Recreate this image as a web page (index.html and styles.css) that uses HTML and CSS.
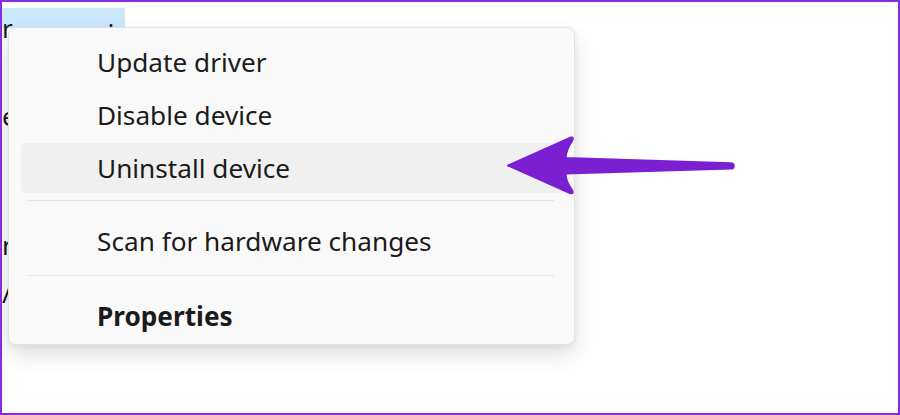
FILE: index.html
```html
<!doctype html>
<html lang="en">
<head>
	<meta charset="UTF-8">
	<title>Device menu</title>
	<link rel="stylesheet" href="styles.css">
</head>
<body>
	<div id="frame">
		<div class="tree">
			<div class="tree-row selected"><span class="dot">.</span></div>
			<div class="tree-line l1">r</div>
			<div class="tree-line l2">e</div>
			<div class="tree-line l3">n</div>
			<div class="tree-line l4">/</div>
		</div>

		<ul class="menu">
			<li class="item"><a href="javascript:;">Update driver</a></li>
			<li class="item"><a href="javascript:;">Disable device</a></li>
			<li class="item hover"><a href="javascript:;">Uninstall device</a></li>
			<li class="sep"></li>
			<li class="item"><a href="javascript:;">Scan for hardware changes</a></li>
			<li class="sep sep-2"></li>
			<li class="item bold"><a href="javascript:;">Properties</a></li>
		</ul>

		<svg class="arrow" width="900" height="415" viewBox="0 0 900 415">
			<path d="M508 165.5 L571 137.5 Q574 137 572 141 Q566 150 565.5 158 L731 163.2 A2.7 2.7 0 0 1 731 168.6 L565.5 173.5 Q566 182 572 190 Q574 194.5 570 193 Z" fill="#7a1fd2" stroke="#7a1fd2" stroke-width="2" stroke-linejoin="round"/>
		</svg>
	</div>
</body>
</html>
```

FILE: styles.css
```css
body,ul,li{
	margin:0;
	padding:0;
}
body{
	background:#fff;
	font-family:"Noto Sans","Open Sans",sans-serif;
}
ul li{
	list-style:none;
}
a{
	text-decoration:none;
	color:#1b1b1b;
	outline:none;
}
#frame{
	width:900px;
	height:415px;
	box-sizing:border-box;
	border:2px solid #8a2be2;
	position:relative;
	overflow:hidden;
	background:#fff;
}

/* tree behind the menu */
.tree{
	padding-top:6px;
	font-size:26px;
	color:#1b1b1b;
}
.tree-row.selected{
	width:123px;
	height:20px;
	line-height:20px;
	padding-left:106px;
	box-sizing:border-box;
	background:#cce8ff;
	font-size:22px;
}
.tree-line{
	width:14px;
	height:32px;
	line-height:32px;
}
.tree-line.l1{
	margin-top:-16px;
}
.tree-line.l2{
	margin-top:56px;
}
.tree-line.l3{
	margin-top:97px;
}
.tree-line.l4{
	margin-top:16px;
}

/* context menu */
.menu{
	position:absolute;
	left:6px;
	top:25px;
	width:543px;
	padding:9px 10px 3px 12px;
	background:#f9f9f9;
	border:1px solid #e2e2e2;
	border-radius:8px;
	box-shadow:0 10px 22px rgba(0,0,0,0.13),0 2px 6px rgba(0,0,0,0.05);
}
.menu .item{
	height:50px;
	margin-bottom:3px;
	border-radius:5px;
}
.menu .item:last-child{
	margin-bottom:0;
}
.menu .item a{
	display:block;
	height:50px;
	line-height:50px;
	padding-left:76px;
	font-size:26.2px;
}
.menu .item.hover{
	background:#f0f0f0;
}
.menu .item.bold a{
	font-weight:700;
}
.menu .sep{
	height:1px;
	background:#e4e4e4;
	margin:7px 10px 15px 6px;
}
.menu .sep.sep-2{
	margin-top:9px;
}

.arrow{
	position:absolute;
	left:-2px;
	top:-2px;
	pointer-events:none;
}
```
